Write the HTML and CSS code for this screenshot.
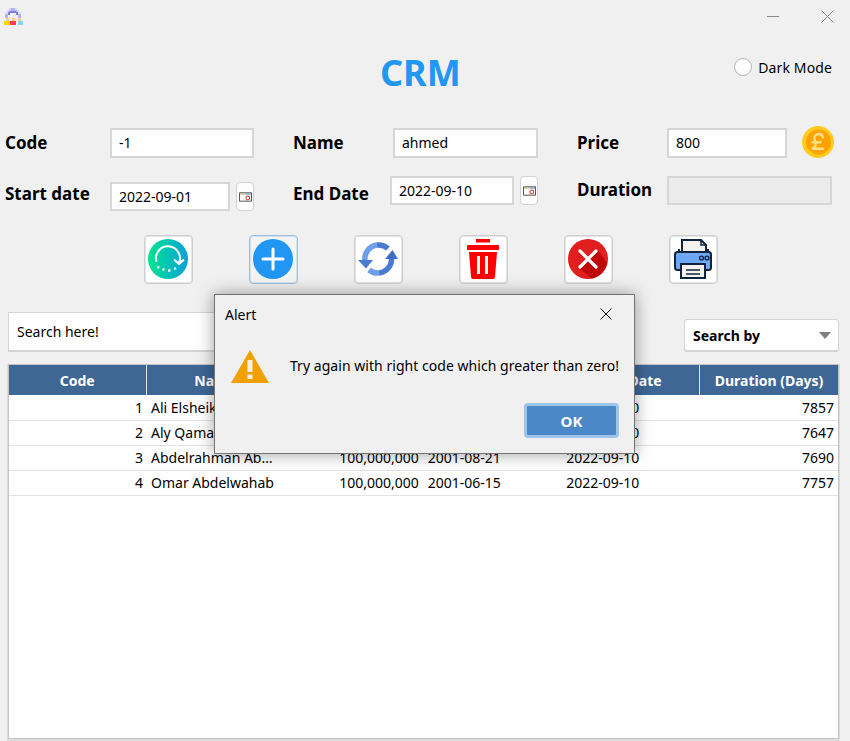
FILE: index.html
```html
<!DOCTYPE html>
<html lang="en">
<head>
<meta charset="utf-8">
<title>CRM</title>
<link rel="stylesheet" href="styles.css">
</head>
<body>
<div class="window">
  <div class="titlebar">
    <svg class="app-icon" viewBox="0 0 20 20" shape-rendering="crispEdges">
      <path fill="#d9d8f6" d="M6 1h8v2h2v2h2v6h-3V7h-1V5H6v2H5v4H2V5h2V3h2z"/>
      <path fill="#b5b3ec" d="M6 3h2V1h4v2h2v2H6zM3 7h2v4H2V8zM15 7h3v4h-3z"/>
      <path fill="#7d7bdc" d="M7 4h6v1h2v3h-2V6H7v2H5V5h2z"/>
      <path fill="#fbc9a0" d="M3 11h3v3H3zM9 11h3v3H9zM15 11h3v3h-3z"/>
      <path fill="#ffd400" d="M1 14h6v4H1z"/>
      <path fill="#ff3b4e" d="M7 14h6v4H7z"/>
      <path fill="#7fd8f8" d="M15 14h5v4h-5z"/>
    </svg>
    <div class="win-controls">
      <svg class="win-min" viewBox="0 0 12 1"><path d="M0 .5h12" stroke="#8a8a8a" fill="none"/></svg>
      <svg class="win-close" viewBox="0 0 13 13"><path d="M.5.5l12 12M12.500.5l-12 12" stroke="#8a8a8a" fill="none"/></svg>
    </div>
  </div>

  <header class="header">
    <h1 class="brand">CRM</h1>
    <label class="dark-mode"><span class="radio"></span>Dark Mode</label>
  </header>

  <section class="form">
    <div class="form-row row-one">
      <div class="group group-a">
        <span class="label label-a">Code</span>
        <div class="field w-144">-1</div>
      </div>
      <div class="group group-b">
        <span class="label label-b">Name</span>
        <div class="field w-145">ahmed</div>
      </div>
      <div class="group group-c">
        <span class="label label-c">Price</span>
        <div class="field w-120">800</div>
        <svg class="coin" viewBox="0 0 32 32">
          <circle cx="16" cy="16" r="16" fill="#ffcb1f"/>
          <circle cx="16.500" cy="16" r="12.500" fill="#ffa200"/>
          <path d="M21 11.500c-.5-2.500-2.300-3.500-4.200-3.500-2.500 0-4.300 1.800-4.300 4.300 0 2.500 1.200 4 1.200 5.700 0 2-1.200 3.500-3 4.700h10.300M10.500 16.200h8" fill="none" stroke="#ffe08a" stroke-width="2.400" stroke-linecap="round" stroke-linejoin="round"/>
        </svg>
      </div>
    </div>
    <div class="form-row row-two">
      <div class="group group-a">
        <span class="label label-a label-low">Start date</span>
        <div class="date-pair pair-low">
          <div class="field w-120">2022-09-01</div>
          <button class="cal-btn" type="button" aria-label="Pick start date">
            <svg class="cal-icon" viewBox="0 0 14 10"><path fill="#fff" d="M.5.500h13v9H.5z"/><path fill="#e8d9a8" d="M1 1h6v2H1z"/><path fill="#a9c4e4" d="M7 1h6v2H7z"/><path fill="none" stroke="#444" d="M.5.500h13v9H.5z"/><circle cx="9.500" cy="6" r="2" fill="none" stroke="#e0484d" stroke-width="1.200"/></svg>
          </button>
        </div>
      </div>
      <div class="group group-b">
        <span class="label label-b label-mid">End Date</span>
        <div class="date-pair">
          <div class="field w-124">2022-09-10</div>
          <button class="cal-btn" type="button" aria-label="Pick end date">
            <svg class="cal-icon" viewBox="0 0 14 10"><path fill="#fff" d="M.5.500h13v9H.5z"/><path fill="#e8d9a8" d="M1 1h6v2H1z"/><path fill="#a9c4e4" d="M7 1h6v2H7z"/><path fill="none" stroke="#444" d="M.5.500h13v9H.5z"/><circle cx="9.500" cy="6" r="2" fill="none" stroke="#e0484d" stroke-width="1.200"/></svg>
          </button>
        </div>
      </div>
      <div class="group group-c">
        <span class="label label-c">Duration</span>
        <div class="field field-off w-165"></div>
      </div>
    </div>
  </section>

  <section class="actions">
    <button class="act" type="button" aria-label="Reset">
      <svg viewBox="0 0 40 40">
        <defs><linearGradient id="g1" x1="0" x2="1" y1="0" y2="0"><stop offset="0" stop-color="#00e58e"/><stop offset="1" stop-color="#0aa0dc"/></linearGradient></defs>
        <circle cx="20" cy="20" r="20" fill="url(#g1)"/>
        <path d="M8.500 23A12 12 0 1 1 31 24" fill="none" stroke="#fff" stroke-width="2"/>
        <path d="M26 20.500l5 4.500 5-4.500" fill="none" stroke="#fff" stroke-width="2.200"/>
        <path d="M9.500 27.500l1.500 1.500M14.500 30l2 .8M20 31.500h2.500M26 30l2-1" fill="none" stroke="#fff" stroke-width="2.400"/>
      </svg>
    </button>
    <button class="act act-focus" type="button" aria-label="Add">
      <svg viewBox="0 0 40 40"><circle cx="20" cy="20" r="20" fill="#2196f3"/><path d="M10 20h20M20 10v20" stroke="#fff" stroke-width="3" stroke-linecap="round"/></svg>
    </button>
    <button class="act" type="button" aria-label="Update">
      <svg viewBox="0 0 40 40">
        <path d="M7 22A14 14 0 0 1 19 6" fill="none" stroke="#6d9eeb" stroke-width="5.500"/>
        <path d="M19 6A14 14 0 0 1 30 9.500" fill="none" stroke="#4a7bd0" stroke-width="5.500"/>
        <path d="M33.500 19A14 14 0 0 1 21 34" fill="none" stroke="#4a7bd0" stroke-width="5.500"/>
        <path d="M21 34A14 14 0 0 1 11 31" fill="none" stroke="#6d9eeb" stroke-width="5.500"/>
        <path d="M27 20l7.500-9 5.500 9z" fill="#3d6fc8"/>
        <path d="M0 21h15l-7 8.500z" fill="#4a7bd0"/>
      </svg>
    </button>
    <button class="act" type="button" aria-label="Delete">
      <svg viewBox="0 0 40 40" fill="#f00">
        <path d="M13 0h14v3.500H13z"/>
        <path d="M5 6h30q1 0 1 1v4H4V7q0-1 1-1z"/>
        <path fill-rule="evenodd" d="M6 13h28l-2 25q0 2-2 2H10q-2 0-2-2zM14 17v18h3V17zM22 17v18h3V17z"/>
      </svg>
    </button>
    <button class="act" type="button" aria-label="Cancel">
      <svg viewBox="0 0 40 40"><circle cx="20" cy="20" r="20" fill="#e31e1e"/><path d="M29 10L39 24A20 20 0 0 1 24 39.500L11 29z" fill="#bf0606"/><path d="M12 12l16 16M28 12L12 28" stroke="#fff" stroke-width="3.200" stroke-linecap="round"/></svg>
    </button>
    <button class="act" type="button" aria-label="Print">
      <svg viewBox="0 0 40 40">
        <path d="M9 14V1h19l5 5v8z" fill="#f6f2ee" stroke="#10243f" stroke-width="2"/>
        <path d="M28 1v5h5" fill="none" stroke="#10243f" stroke-width="1.500"/>
        <path d="M6 13V10M35 13V10" fill="none" stroke="#10243f" stroke-width="2"/>
        <rect x="2" y="13" width="36" height="18" rx="2.500" fill="#6fa8f5" stroke="#10243f" stroke-width="2"/>
        <circle cx="28.500" cy="19" r="1.900" fill="none" stroke="#10243f" stroke-width="1.400"/>
        <circle cx="34" cy="19" r="1.900" fill="none" stroke="#10243f" stroke-width="1.400"/>
        <path d="M8 25h24v14H8z" fill="#f6f2ee" stroke="#10243f" stroke-width="2"/>
        <path d="M13 31h14M13 35h14" stroke="#10243f" stroke-width="1.500"/>
      </svg>
    </button>
  </section>

  <section class="search-row">
    <div class="search">Search here!</div>
    <div class="combo"><span>Search by</span><i class="caret"></i></div>
  </section>

  <section class="table-wrap">
    <table class="grid">
      <thead>
        <tr><th>Code</th><th>Name</th><th>Price</th><th>Start Date</th><th>End Date</th><th>Duration (Days)</th></tr>
      </thead>
      <tbody>
        <tr><td class="num">1</td><td>Ali Elsheikh</td><td class="num">100,000,000</td><td>2001-03-07</td><td>2022-09-10</td><td class="num">7857</td></tr>
        <tr><td class="num">2</td><td>Aly Qamar</td><td class="num">100,000,000</td><td>2001-10-03</td><td>2022-09-10</td><td class="num">7647</td></tr>
        <tr><td class="num">3</td><td>Abdelrahman Ab…</td><td class="num">100,000,000</td><td>2001-08-21</td><td>2022-09-10</td><td class="num">7690</td></tr>
        <tr><td class="num">4</td><td>Omar Abdelwahab</td><td class="num">100,000,000</td><td>2001-06-15</td><td>2022-09-10</td><td class="num">7757</td></tr>
      </tbody>
    </table>
  </section>

  <div class="dialog" role="alertdialog">
    <div class="dialog-title">
      <span>Alert</span>
      <svg class="dialog-x" viewBox="0 0 12 12"><path d="M.5.500l11 11M11.500.500l-11 11" stroke="#111" fill="none"/></svg>
    </div>
    <div class="dialog-body">
      <svg class="warn" viewBox="0 0 38 33">
        <path d="M19 0l19 33H0z" fill="#f0a000"/>
        <path d="M16.500 10h5v12h-5zM16.500 24.500h5V29h-5z" fill="#f6f0dc"/>
      </svg>
      <p class="dialog-msg">Try again with right code which greater than zero!</p>
    </div>
    <div class="dialog-foot">
      <button class="ok" type="button">OK</button>
    </div>
  </div>
</div>
</body>
</html>
```

FILE: styles.css
```css
* { box-sizing: border-box; }
html, body { margin: 0; padding: 0; }
body {
  background: #f0f0f0;
  color: #000;
  font-family: "Noto Sans", "Open Sans", sans-serif;
  font-size: 14px;
}
.window {
  position: relative;
  width: 850px;
  height: 741px;
  overflow: hidden;
  background: #f0f0f0;
}

/* Title bar */
.titlebar {
  height: 32px;
  display: flex;
  justify-content: space-between;
  align-items: flex-start;
}
.app-icon { width: 20px; height: 20px; margin: 7px 0 0 3px; }
.win-controls { display: flex; align-items: flex-start; padding: 10px 16px 0 0; gap: 42px; }
.win-min { width: 12px; height: 1px; margin-top: 6px; display: block; }
.win-close { width: 13px; height: 13px; display: block; }

/* Header */
.header {
  position: relative;
  height: 94px;
  display: flex;
  justify-content: space-between;
  align-items: flex-start;
  padding-left: 380px;
  padding-right: 18px;
}
.brand {
  margin: 17px 0 0;
  font-size: 36px;
  line-height: 48px;
  font-weight: 700;
  color: #2196f3;
}
.dark-mode {
  display: flex;
  align-items: center;
  gap: 6px;
  margin-top: 25px;
  height: 20px;
  font-size: 14px;
  letter-spacing: .12px;
}
.radio {
  width: 18px;
  height: 18px;
  border-radius: 50%;
  background: #fff;
  border: 1px solid #b4b4b4;
}

/* Form */
.form { padding-left: 5px; }
.form-row { display: flex; }
.row-one { height: 32px; align-items: flex-end; }
.row-two { height: 36px; margin-top: 18px; align-items: flex-start; }
.group { display: flex; }
.group-a { width: 288px; }
.group-b { width: 284px; }
.group-c { width: 258px; }
.row-one .group { align-items: center; height: 30px; }
.label {
  font-weight: 700;
  font-size: 17px;
  line-height: 30px;
  white-space: nowrap;
}
.label-a { width: 105px; }
.label-b { width: 100px; }
.label-c { width: 90px; }
.label-low { margin-top: 3px; }
.label-mid { width: 97px; margin-top: 3px; }
.row-two .label-c { line-height: 28px; }
.field {
  height: 30px;
  background: #fff;
  border: 2px solid #d6d6d6;
  padding: 0 7px;
  font-size: 14px;
  line-height: 26px;
  white-space: nowrap;
}
.row-two .field { height: 29px; line-height: 25px; }
.field-off { background: #ececec; }
.w-144 { width: 144px; }
.w-145 { width: 145px; }
.w-120 { width: 120px; }
.w-124 { width: 124px; }
.w-165 { width: 165px; }
.coin { width: 32px; height: 32px; margin: -3px 0 0 15px; display: block; flex: none; }
.date-pair { display: flex; gap: 6px; }
.pair-low { margin-top: 6px; }
.cal-btn {
  width: 18px;
  height: 29px;
  padding: 0;
  background: #fdfdfd;
  border: 1px solid #d2d2d2;
  border-radius: 4px;
  display: flex;
  align-items: center;
  justify-content: center;
}
.cal-icon { width: 13px; height: 10px; display: block; }

/* Action buttons */
.actions {
  display: flex;
  gap: 56px;
  margin-top: 23px;
  padding-left: 144px;
}
.act {
  width: 49px;
  height: 49px;
  padding: 0 1px 1px 0;
  background: #fff;
  border: 1px solid #cfcfcf;
  border-radius: 4px;
  display: flex;
  align-items: center;
  justify-content: center;
  box-shadow: inset 0 0 0 1px #e4e4e4;
}
.act svg { width: 40px; height: 40px; display: block; }
.act-focus { background: #f4f4f4; border-color: #9dbfdf; box-shadow: inset 0 0 0 1px #d4e2ef; }

/* Search */
.search-row {
  display: flex;
  justify-content: space-between;
  align-items: flex-end;
  height: 40px;
  margin-top: 28px;
  padding: 0 11px 0 8px;
}
.search {
  width: 400px;
  height: 40px;
  background: #fff;
  border: 1px solid #d4d4d4;
  border-bottom-width: 2px;
  padding: 0 8px;
  font-size: 14px;
  line-height: 38px;
}
.combo {
  width: 155px;
  height: 33px;
  background: #fff;
  border: 1px solid #d4d4d4;
  border-bottom-width: 2px;
  border-radius: 3px;
  padding: 0 8px;
  display: flex;
  justify-content: space-between;
  align-items: center;
  font-weight: 700;
  font-size: 14px;
}
.caret {
  width: 0;
  height: 0;
  border-left: 6px solid transparent;
  border-right: 6px solid transparent;
  border-top: 7px solid #808080;
  margin-right: -1px;
}

/* Table */
.table-wrap {
  width: 831px;
  height: 375px;
  margin: 12px 0 0 8px;
  background: #fff;
  border: 1px solid #c4c4c4;
  box-shadow: 0 1px 0 1px #dcdcdc;
}
.grid {
  width: 829px;
  border-collapse: collapse;
  table-layout: fixed;
  font-size: 14px;
}
.grid th {
  height: 30px;
  padding: 0;
  background: #3f6796;
  color: #fff;
  font-weight: 700;
  font-size: 14px;
  border-right: 1px solid #dfe6ee;
  text-align: center;
}
.grid th:first-child { width: 137px; }
.grid th:last-child { border-right: 0; }
.grid td {
  height: 25px;
  padding: 1px 4px 0 5px;
  border-bottom: 1px solid #e2e2e2;
  white-space: nowrap;
  overflow: hidden;
  line-height: 22px;
}
.grid td:first-child { padding-right: 3px; }
.grid .num { text-align: right; }

/* Alert dialog */
.dialog {
  position: absolute;
  left: 214px;
  top: 294px;
  width: 421px;
  height: 160px;
  background: #f0f0f0;
  border: 1px solid #747474;
  box-shadow: 0 0 16px rgba(0, 0, 0, .38);
  display: flex;
  flex-direction: column;
}
.dialog-title {
  display: flex;
  justify-content: space-between;
  align-items: center;
  height: 38px;
  padding: 0 22px 0 10px;
  font-size: 14px;
}
.dialog-x { width: 12px; height: 12px; display: block; }
.dialog-body {
  display: flex;
  align-items: center;
  padding: 17px 0 0 16px;
}
.warn { width: 38px; height: 33px; display: block; flex: none; }
.dialog-msg {
  margin: -2px 0 0 21px;
  font-size: 14px;
  line-height: 20px;
  white-space: nowrap;
  letter-spacing: .04px;
}
.dialog-foot {
  display: flex;
  justify-content: flex-end;
  padding: 20px 15px 0 0;
}
.ok {
  width: 95px;
  height: 35px;
  padding: 0;
  background: #4a88c7;
  border: 3px solid #9dc5ec;
  border-radius: 4px;
  color: #fff;
  font-family: inherit;
  font-weight: 700;
  font-size: 15px;
}
```
